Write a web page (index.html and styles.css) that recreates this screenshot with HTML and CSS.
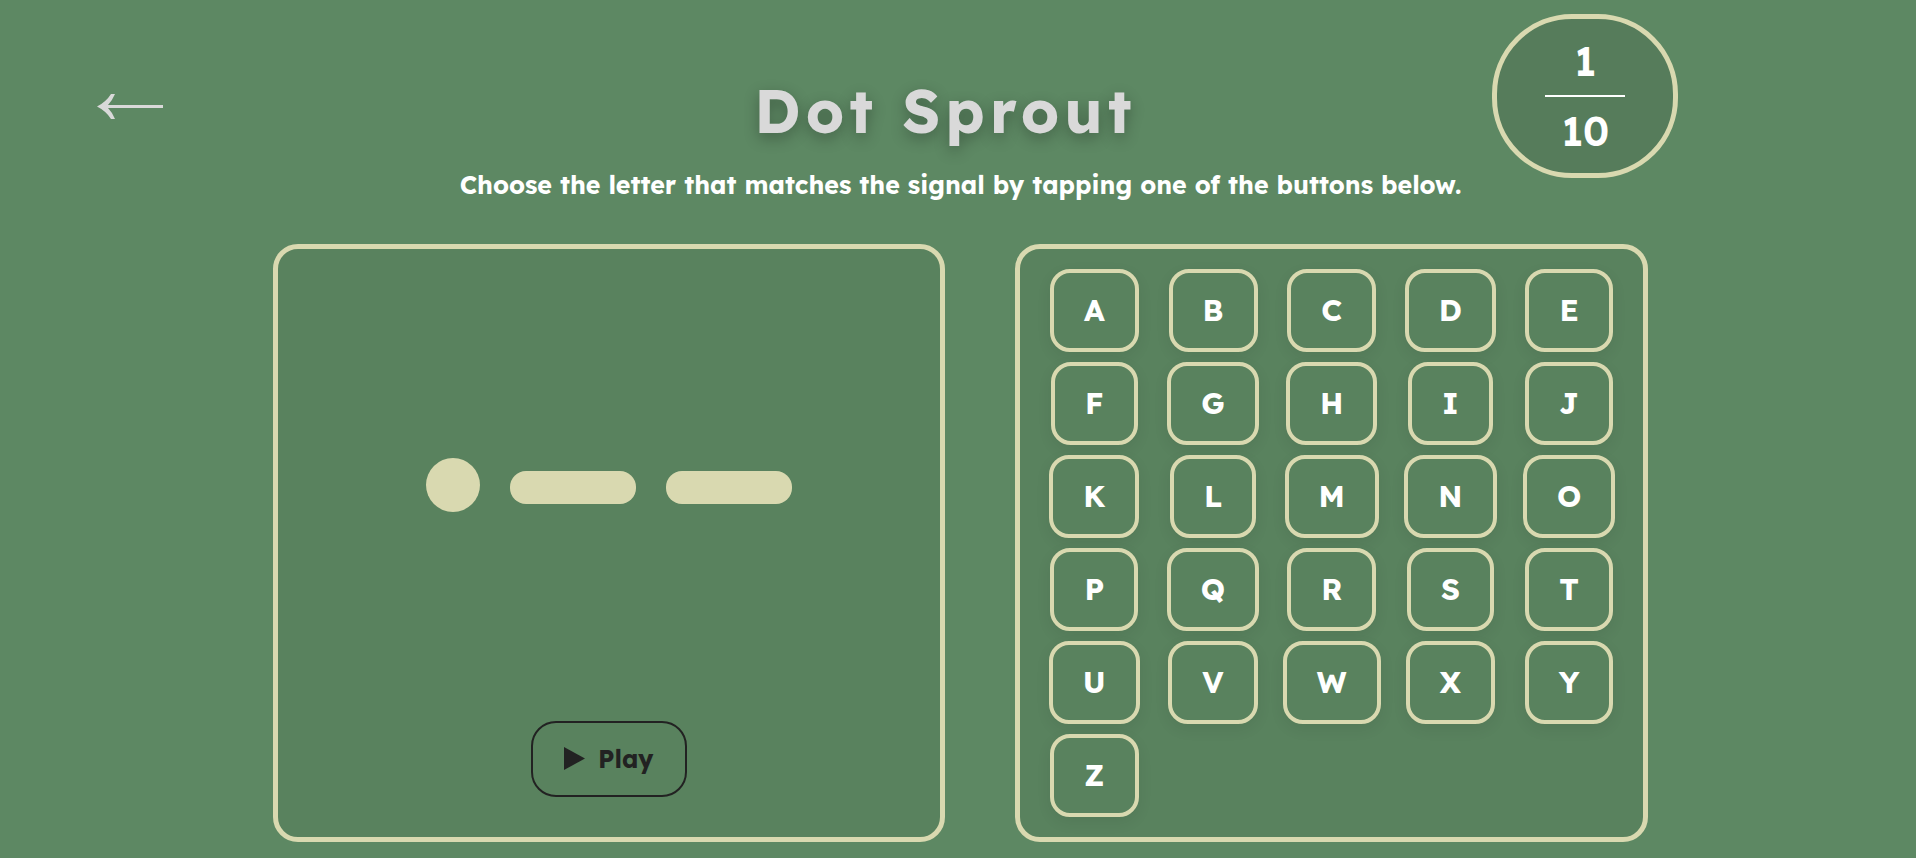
FILE: index.html
```html
<!DOCTYPE html>
<html lang="en">
<head>
<meta charset="utf-8">
<title>Dot Sprout</title>
<meta name="viewport" content="width=device-width, initial-scale=1">
<link rel="stylesheet" href="styles.css">
</head>
<body>
<div class="page">
  <header class="header">
    <a class="back" href="#" aria-label="Back">
      <svg class="back-icon" viewBox="0 0 66 26" aria-hidden="true"><path d="M0 12.500Q9 8 14 0H18Q15 7 11 11H66V14H11Q15 18 18 25H14Q9 17 0 12.500Z"/></svg>
    </a>
    <div class="heading">
      <h1 class="title">Dot Sprout</h1>
      <p class="subtitle">Choose the letter that matches the signal by tapping one of the buttons below.</p>
    </div>
    <div class="counter">
      <span>1</span>
      <span class="counter-line"></span>
      <span>10</span>
    </div>
  </header>
  <main class="boards">
    <section class="board signal">
      <div class="morse">
        <span class="dot"></span>
        <span class="dash"></span>
        <span class="dash"></span>
      </div>
      <button class="play" type="button">
        <svg class="play-icon" viewBox="0 0 21 23" aria-hidden="true"><path d="M0 0L21 11.500L0 23Z"/></svg>
        Play
      </button>
    </section>
    <section class="board keys">
      <button class="key" type="button">A</button>
      <button class="key" type="button">B</button>
      <button class="key" type="button">C</button>
      <button class="key" type="button">D</button>
      <button class="key" type="button">E</button>
      <button class="key" type="button">F</button>
      <button class="key" type="button">G</button>
      <button class="key" type="button">H</button>
      <button class="key" type="button">I</button>
      <button class="key" type="button">J</button>
      <button class="key" type="button">K</button>
      <button class="key" type="button">L</button>
      <button class="key" type="button">M</button>
      <button class="key" type="button">N</button>
      <button class="key" type="button">O</button>
      <button class="key" type="button">P</button>
      <button class="key" type="button">Q</button>
      <button class="key" type="button">R</button>
      <button class="key" type="button">S</button>
      <button class="key" type="button">T</button>
      <button class="key" type="button">U</button>
      <button class="key" type="button">V</button>
      <button class="key" type="button">W</button>
      <button class="key" type="button">X</button>
      <button class="key" type="button">Y</button>
      <button class="key" type="button">Z</button>
    </section>
  </main>
</div>
</body>
</html>
```
FILE: styles.css
```css
* {
  box-sizing: border-box;
}

html {
  background: #fff;
}

body {
  margin: 0;
  font-family: "Lexend", "Inter", "Open Sans", sans-serif;
  font-weight: 700;
  color: #fff;
}

.page {
  min-height: calc(100vh - 1px);
  padding: 14px 0 16px 5px;
  background: #5d8863;
}

.header {
  display: grid;
  grid-template-columns: 1fr auto 1fr;
  margin-bottom: 42px;
}

.back {
  justify-self: start;
  align-self: start;
  padding: 80px 0 0 92px;
}

.back-icon {
  display: block;
  width: 66px;
  height: 26px;
  fill: #d9d9d9;
}

.heading {
  padding-top: 60px;
  text-align: center;
}

.title {
  margin: 0;
  padding-right: 30px;
  font-size: 60px;
  line-height: 74px;
  letter-spacing: 5px;
  color: #d9d9d9;
  text-shadow: 0 5px 15px rgba(0, 0, 0, 0.3);
}

.subtitle {
  margin: 20px 0 0;
  font-size: 25px;
  line-height: 34px;
  white-space: nowrap;
}

.counter {
  display: flex;
  flex-direction: column;
  align-items: center;
  gap: 9px;
  justify-self: start;
  align-self: start;
  width: 186px;
  margin-left: 31px;
  padding: 17px 0;
  border: 5px solid #d9d9b0;
  border-radius: 80px;
  background: #567c5b;
  font-size: 40px;
  font-weight: 600;
  line-height: 50px;
}

.counter-line {
  width: 80px;
  height: 2px;
  background: #fff;
}

.boards {
  display: grid;
  grid-template-columns: 672fr 633fr;
  gap: 70px;
  width: 72%;
  margin: 0 auto;
}

.board {
  border: 5px solid #d9d9b0;
  border-radius: 25px;
  background: #59825e;
}

.signal {
  display: flex;
  flex-direction: column;
  align-items: center;
  padding-bottom: 40px;
}

.morse {
  display: flex;
  flex: 1;
  align-items: center;
  gap: 30px;
}

.dot {
  width: 54px;
  height: 54px;
  border-radius: 50%;
  background: #d9d9b0;
}

.dash {
  width: 126px;
  height: 33px;
  margin-top: 5px;
  border-radius: 16px;
  background: #d9d9b0;
}

.play {
  display: flex;
  align-items: center;
  gap: 13px;
  height: 76px;
  padding: 0 31px 2px;
  border: 2px solid #222;
  border-radius: 25px;
  background: transparent;
  font: inherit;
  font-size: 25px;
  color: #222;
}

.play-icon {
  width: 21px;
  height: 23px;
  fill: #222;
}

.keys {
  display: grid;
  grid-template-columns: repeat(5, 1fr);
  justify-items: center;
  gap: 10px;
  padding: 20px;
}

.key {
  height: 83px;
  padding: 0 30px 2px;
  border: 4px solid #d9d9b0;
  border-radius: 20px;
  background: #59825e;
  box-shadow: 0 5px 15px rgba(0, 0, 0, 0.07);
  font: inherit;
  font-size: 30px;
  color: #fff;
}
```
